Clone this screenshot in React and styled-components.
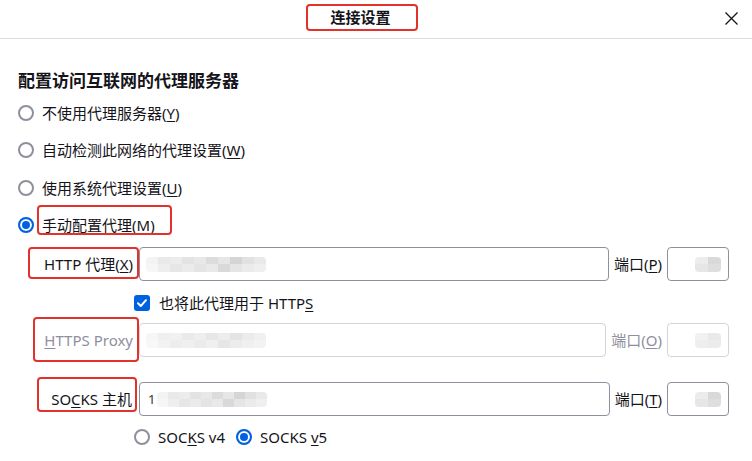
import React from "react";
import styled, { createGlobalStyle } from "styled-components";

const Global = createGlobalStyle`
  html, body { margin: 0; padding: 0; background: #fff; }
  body {
    font-family: "Noto Sans", "Noto Sans CJK SC", sans-serif;
    color: #15141a;
    font-size: 15px;
  }
  * { box-sizing: border-box; }
`;

const RED = "#e3312b";

const Dialog = styled.div`
  width: 752px;
  height: 461px;
  overflow: hidden;
  background: #fff;
`;

const Header = styled.header`
  height: 39px;
  display: flex;
  align-items: flex-start;
  border-bottom: 1px solid #dcdcdf;
`;

const Spacer = styled.div`
  flex: 1;
`;

const Title = styled.h1`
  margin: 7px 17px 0 0;
  font-size: 15px;
  font-weight: 700;
  line-height: 20px;
  font-family: "Noto Sans CJK SC", sans-serif;
`;

const CloseArea = styled.div`
  flex: 1;
  display: flex;
  justify-content: flex-end;
  align-self: center;
  padding-right: 14px;
  padding-bottom: 2px;
`;

const Marked = styled.span`
  position: relative;
  display: inline-block;
  &::after {
    content: "";
    position: absolute;
    top: ${(p) => p.$t}px;
    right: ${(p) => p.$r}px;
    bottom: ${(p) => p.$b}px;
    left: ${(p) => p.$l}px;
    border: 2px solid ${RED};
    border-radius: 4px;
    pointer-events: none;
  }
`;

const Content = styled.main`
  padding: 29px 23px 0 18px;
`;

const Heading = styled.h2`
  margin: 0;
  font-size: 17px;
  font-weight: 700;
  line-height: 24px;
  font-family: "Noto Sans CJK SC", sans-serif;
`;

const RadioList = styled.div`
  margin-top: 2px;
  display: flex;
  flex-direction: column;
`;

const RadioRow = styled.label`
  height: 37.5px;
  display: flex;
  align-items: center;
  gap: 8px;
  line-height: 20px;
  white-space: nowrap;
`;

const RadioDot = styled.span`
  width: 16px;
  height: 16px;
  border-radius: 50%;
  flex: none;
  border: 2px solid ${(p) => (p.$checked ? "#0061e0" : "#8f8f9d")};
  background: #fff;
  box-shadow: ${(p) => (p.$checked ? "inset 0 0 0 2px #fff, inset 0 0 0 6px #0061e0" : "none")};
`;

const Key = styled.u`
  text-decoration-thickness: 1px;
  text-underline-offset: 2px;
`;

const Row = styled.div`
  display: flex;
  align-items: center;
  height: ${(p) => p.$h || 34}px;
  margin-top: ${(p) => p.$mt || 0}px;
  padding-left: ${(p) => p.$pl || 0}px;
  white-space: nowrap;
  line-height: 20px;
  color: ${(p) => (p.$disabled ? "#8f8f9d" : "#15141a")};
`;

const LabelCell = styled.div`
  width: 121px;
  flex: none;
  display: flex;
  justify-content: flex-end;
  padding-right: ${(p) => p.$pr || 6}px;
`;

const Field = styled.div`
  flex: ${(p) => (p.$w ? "none" : "1")};
  width: ${(p) => (p.$w ? `${p.$w}px` : "auto")};
  height: 34px;
  border: 1px solid ${(p) => (p.$disabled ? "#d4d4da" : "#8f8f9d")};
  border-radius: 4px;
  background: #fff;
  display: flex;
  align-items: center;
  justify-content: ${(p) => (p.$end ? "flex-end" : "flex-start")};
  padding: 0 ${(p) => (p.$end ? 7 : 0)}px 0 ${(p) => (p.$end ? 0 : 6)}px;
  color: #15141a;
`;

const PortLabel = styled.span`
  margin: 0 5px;
`;

const Mosaic = styled.span`
  display: grid;
  grid-template-columns: repeat(${(p) => p.$cols}, ${(p) => p.$cw}px);
  grid-template-rows: 7.5px 7.5px;
  border-radius: 4px;
  overflow: hidden;
`;

const Cell = styled.span`
  background: ${(p) => p.$c};
`;

const Lead = styled.span`
  font-size: 13px;
  margin: 0 2px 0 2px;
  color: #333;
`;

const Check = styled.span`
  width: 16px;
  height: 16px;
  border-radius: 3px;
  background: #0061e0;
  display: inline-flex;
  align-items: center;
  justify-content: center;
  margin-right: 9px;
`;

const VersionOption = styled.label`
  display: flex;
  align-items: center;
  gap: 8px;
  margin-right: 11px;
`;

const wide = [
  ["#f3f3f3", "#e9e9e9", "#ececec", "#e3e3e3", "#e8e8e8", "#dcdcdc", "#e6e6e6", "#d5d5d5", "#e1e1e1", "#e9e9e9"],
  ["#f6f6f6", "#eeeeee", "#e6e6e6", "#ebebeb", "#e4e4e4", "#e9e9e9", "#d9d9d9", "#e5e5e5", "#ebebeb", "#efefef"],
];
const faint = [
  ["#f6f6f6", "#efefef", "#f1f1f1", "#eaeaea", "#eeeeee", "#e7e7e7", "#ededed", "#e4e4e4", "#ebebeb", "#f0f0f0"],
  ["#f8f8f8", "#f2f2f2", "#ededed", "#f0f0f0", "#ebebeb", "#efefef", "#e6e6e6", "#ececec", "#f0f0f0", "#f3f3f3"],
];
const port = [["#ececec", "#d9d9d9"], ["#e6e6e6", "#dedede"]];
const portFaint = [["#f1f1f1", "#e9e9e9"], ["#eeeeee", "#ececec"]];

function Blur({ rows, cw }) {
  const cols = rows[0].length;
  return (
    <Mosaic $cols={cols} $cw={cw} aria-hidden="true">
      {rows.flatMap((r, i) => r.map((c, j) => <Cell key={`${i}-${j}`} $c={c} />))}
    </Mosaic>
  );
}

function Radio({ checked, children }) {
  return (
    <RadioRow>
      <RadioDot $checked={checked} />
      {children}
    </RadioRow>
  );
}

function CloseIcon() {
  return (
    <svg width="13" height="13" viewBox="0 0 13 13" aria-label="关闭">
      <path d="M0.5 0.5L12.5 12.5M12.5 0.5L0.5 12.5" stroke="#15141a" strokeWidth="1.3" fill="none" />
    </svg>
  );
}

function CheckMark() {
  return (
    <svg width="12" height="12" viewBox="0 0 12 12">
      <path d="M2 6.3L4.8 9L10 3.2" stroke="#fff" strokeWidth="2" fill="none" strokeLinecap="round" strokeLinejoin="round" />
    </svg>
  );
}

export default function App() {
  return (
    <>
      <Global />
      <Dialog>
        <Header>
          <Spacer />
          <Title>
            <Marked $t={-3} $r={-27} $b={-4} $l={-25}>连接设置</Marked>
          </Title>
          <CloseArea>
            <CloseIcon />
          </CloseArea>
        </Header>
        <Content>
          <Heading>配置访问互联网的代理服务器</Heading>
          <RadioList>
            <Radio>
              <span>不使用代理服务器(<Key>Y</Key>)</span>
            </Radio>
            <Radio>
              <span>自动检测此网络的代理设置(<Key>W</Key>)</span>
            </Radio>
            <Radio>
              <span>使用系统代理设置(<Key>U</Key>)</span>
            </Radio>
            <Radio checked>
              <Marked $t={-10} $r={-17} $b={0} $l={-5}>手动配置代理(<Key>M</Key>)</Marked>
            </Radio>
          </RadioList>

          <Row $mt={3}>
            <LabelCell>
              <Marked $t={-7} $r={-6} $b={-5} $l={-16}>HTTP 代理(<Key>X</Key>)</Marked>
            </LabelCell>
            <Field>
              <Blur rows={wide} cw={12} />
            </Field>
            <PortLabel>端口(<Key>P</Key>)</PortLabel>
            <Field $w={62} $end>
              <Blur rows={port} cw={13} />
            </Field>
          </Row>

          <Row $h={24} $mt={10} $pl={116}>
            <Check>
              <CheckMark />
            </Check>
            <span>也将此代理用于 HTTP<Key>S</Key></span>
          </Row>

          <Row $mt={8} $disabled>
            <LabelCell>
              <Marked $t={-13} $r={-6} $b={-12} $l={-11}><Key>H</Key>TTPS Proxy</Marked>
            </LabelCell>
            <Field $disabled>
              <Blur rows={faint} cw={12} />
            </Field>
            <PortLabel>端口(<Key>O</Key>)</PortLabel>
            <Field $w={62} $end $disabled>
              <Blur rows={portFaint} cw={13} />
            </Field>
          </Row>

          <Row $mt={25}>
            <LabelCell $pr={7}>
              <Marked $t={-12} $r={-5} $b={-3} $l={-14}>SO<Key>C</Key>KS 主机</Marked>
            </LabelCell>
            <Field>
              <Lead>1</Lead>
              <Blur rows={wide} cw={11} />
            </Field>
            <PortLabel>端口(<Key>T</Key>)</PortLabel>
            <Field $w={62} $end>
              <Blur rows={port} cw={13} />
            </Field>
          </Row>

          <Row $h={24} $mt={9} $pl={116}>
            <VersionOption>
              <RadioDot />
              <span>SOC<Key>K</Key>S v4</span>
            </VersionOption>
            <VersionOption>
              <RadioDot $checked />
              <span>SOCKS <Key>v</Key>5</span>
            </VersionOption>
          </Row>
        </Content>
      </Dialog>
    </>
  );
}
